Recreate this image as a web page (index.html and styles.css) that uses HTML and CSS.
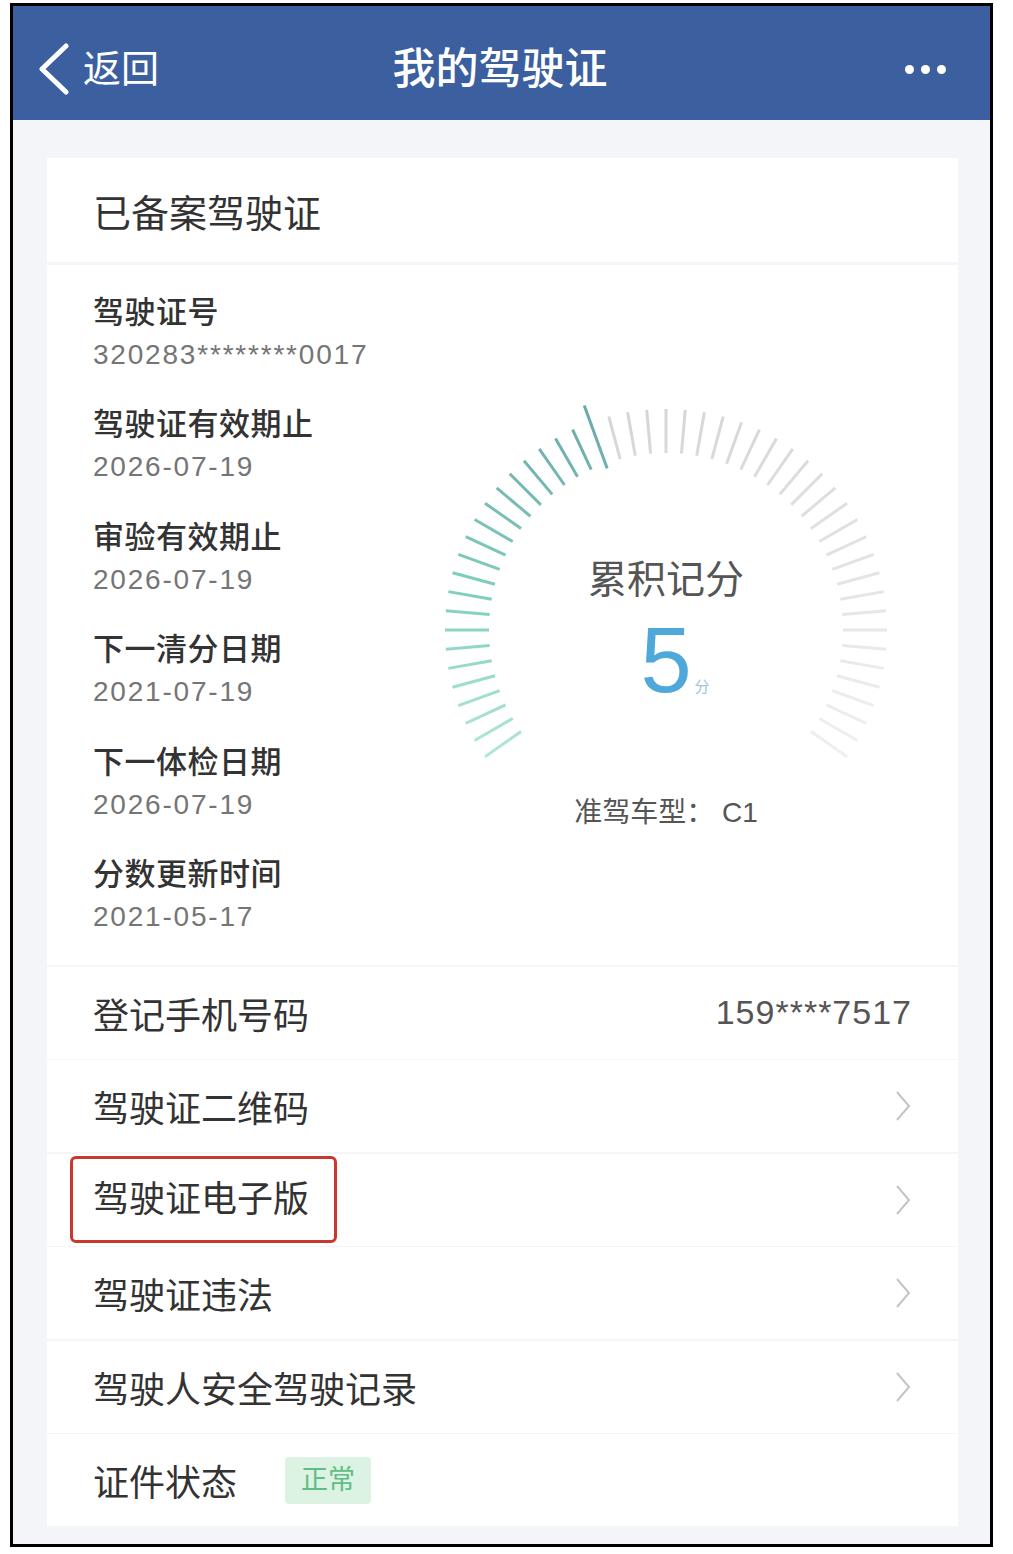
FILE: index.html
```html
<!DOCTYPE html>
<html lang="zh-CN">
<head>
  <meta charset="UTF-8">
  <title>我的驾驶证</title>
  <link rel="stylesheet" href="styles.css">
</head>
<body>
  <div class="phone">
    <!-- 顶部导航 -->
    <header class="navbar">
      <a class="nav-back">
        <svg width="32" height="52" viewBox="0 0 32 52"><polyline points="28,3 4,26 28,49" fill="none" stroke="#fff" stroke-width="5" stroke-linecap="round" stroke-linejoin="round"/></svg>
        <span>返回</span>
      </a>
      <h1 class="nav-title">我的驾驶证</h1>
      <span class="nav-more"><i></i><i></i><i></i></span>
    </header>

    <main class="page">
      <section class="card card-title">已备案驾驶证</section>

      <section class="card license">
        <dl class="license-info">
          <div class="info-item"><dt>驾驶证号</dt><dd>320283********0017</dd></div>
          <div class="info-item"><dt>驾驶证有效期止</dt><dd>2026-07-19</dd></div>
          <div class="info-item"><dt>审验有效期止</dt><dd>2026-07-19</dd></div>
          <div class="info-item"><dt>下一清分日期</dt><dd>2021-07-19</dd></div>
          <div class="info-item"><dt>下一体检日期</dt><dd>2026-07-19</dd></div>
          <div class="info-item"><dt>分数更新时间</dt><dd>2021-05-17</dd></div>
        </dl>

        <!-- 记分表盘 -->
        <div class="score">
          <div class="dial">
            <svg class="dial-ticks" width="500" height="410" viewBox="0 0 500 410">
              <defs>
                <linearGradient id="tealFade" x1="0" y1="1" x2="0.35" y2="0">
                  <stop offset="0" stop-color="#c4efe2"/>
                  <stop offset="0.45" stop-color="#80d0bd"/>
                  <stop offset="1" stop-color="#6aa3a6"/>
                </linearGradient>
                <linearGradient id="greyFade" x1="0.3" y1="0" x2="0.6" y2="1">
                  <stop offset="0" stop-color="#d2d2d2"/>
                  <stop offset="1" stop-color="#f0f0f0"/>
                </linearGradient>
                <mask id="tealMask">
                  <g stroke="#fff" stroke-width="3">
                    <line x1="250" y1="29" x2="250" y2="73" transform="rotate(-125 250 250)"/>
                    <line x1="250" y1="29" x2="250" y2="73" transform="rotate(-120 250 250)"/>
                    <line x1="250" y1="29" x2="250" y2="73" transform="rotate(-115 250 250)"/>
                    <line x1="250" y1="29" x2="250" y2="73" transform="rotate(-110 250 250)"/>
                    <line x1="250" y1="29" x2="250" y2="73" transform="rotate(-105 250 250)"/>
                    <line x1="250" y1="29" x2="250" y2="73" transform="rotate(-100 250 250)"/>
                    <line x1="250" y1="29" x2="250" y2="73" transform="rotate(-95 250 250)"/>
                    <line x1="250" y1="29" x2="250" y2="73" transform="rotate(-90 250 250)"/>
                    <line x1="250" y1="29" x2="250" y2="73" transform="rotate(-85 250 250)"/>
                    <line x1="250" y1="29" x2="250" y2="73" transform="rotate(-80 250 250)"/>
                    <line x1="250" y1="29" x2="250" y2="73" transform="rotate(-75 250 250)"/>
                    <line x1="250" y1="29" x2="250" y2="73" transform="rotate(-70 250 250)"/>
                    <line x1="250" y1="29" x2="250" y2="73" transform="rotate(-65 250 250)"/>
                    <line x1="250" y1="29" x2="250" y2="73" transform="rotate(-60 250 250)"/>
                    <line x1="250" y1="29" x2="250" y2="73" transform="rotate(-55 250 250)"/>
                    <line x1="250" y1="29" x2="250" y2="73" transform="rotate(-50 250 250)"/>
                    <line x1="250" y1="29" x2="250" y2="73" transform="rotate(-45 250 250)"/>
                    <line x1="250" y1="29" x2="250" y2="73" transform="rotate(-40 250 250)"/>
                    <line x1="250" y1="29" x2="250" y2="73" transform="rotate(-35 250 250)"/>
                    <line x1="250" y1="29" x2="250" y2="73" transform="rotate(-30 250 250)"/>
                    <line x1="250" y1="29" x2="250" y2="73" transform="rotate(-25 250 250)"/>
                    <line x1="250" y1="11" x2="250" y2="78" transform="rotate(-20 250 250)"/>
                  </g>
                </mask>
                <mask id="greyMask">
                  <g stroke="#fff" stroke-width="3">
                    <line x1="250" y1="29" x2="250" y2="73" transform="rotate(-15 250 250)"/>
                    <line x1="250" y1="29" x2="250" y2="73" transform="rotate(-10 250 250)"/>
                    <line x1="250" y1="29" x2="250" y2="73" transform="rotate(-5 250 250)"/>
                    <line x1="250" y1="29" x2="250" y2="73" transform="rotate(0 250 250)"/>
                    <line x1="250" y1="29" x2="250" y2="73" transform="rotate(5 250 250)"/>
                    <line x1="250" y1="29" x2="250" y2="73" transform="rotate(10 250 250)"/>
                    <line x1="250" y1="29" x2="250" y2="73" transform="rotate(15 250 250)"/>
                    <line x1="250" y1="29" x2="250" y2="73" transform="rotate(20 250 250)"/>
                    <line x1="250" y1="29" x2="250" y2="73" transform="rotate(25 250 250)"/>
                    <line x1="250" y1="29" x2="250" y2="73" transform="rotate(30 250 250)"/>
                    <line x1="250" y1="29" x2="250" y2="73" transform="rotate(35 250 250)"/>
                    <line x1="250" y1="29" x2="250" y2="73" transform="rotate(40 250 250)"/>
                    <line x1="250" y1="29" x2="250" y2="73" transform="rotate(45 250 250)"/>
                    <line x1="250" y1="29" x2="250" y2="73" transform="rotate(50 250 250)"/>
                    <line x1="250" y1="29" x2="250" y2="73" transform="rotate(55 250 250)"/>
                    <line x1="250" y1="29" x2="250" y2="73" transform="rotate(60 250 250)"/>
                    <line x1="250" y1="29" x2="250" y2="73" transform="rotate(65 250 250)"/>
                    <line x1="250" y1="29" x2="250" y2="73" transform="rotate(70 250 250)"/>
                    <line x1="250" y1="29" x2="250" y2="73" transform="rotate(75 250 250)"/>
                    <line x1="250" y1="29" x2="250" y2="73" transform="rotate(80 250 250)"/>
                    <line x1="250" y1="29" x2="250" y2="73" transform="rotate(85 250 250)"/>
                    <line x1="250" y1="29" x2="250" y2="73" transform="rotate(90 250 250)"/>
                    <line x1="250" y1="29" x2="250" y2="73" transform="rotate(95 250 250)"/>
                    <line x1="250" y1="29" x2="250" y2="73" transform="rotate(100 250 250)"/>
                    <line x1="250" y1="29" x2="250" y2="73" transform="rotate(105 250 250)"/>
                    <line x1="250" y1="29" x2="250" y2="73" transform="rotate(110 250 250)"/>
                    <line x1="250" y1="29" x2="250" y2="73" transform="rotate(115 250 250)"/>
                    <line x1="250" y1="29" x2="250" y2="73" transform="rotate(120 250 250)"/>
                    <line x1="250" y1="29" x2="250" y2="73" transform="rotate(125 250 250)"/>
                  </g>
                </mask>
              </defs>
              <rect width="500" height="410" fill="url(#tealFade)" mask="url(#tealMask)"/>
              <rect width="500" height="410" fill="url(#greyFade)" mask="url(#greyMask)"/>
            </svg>
            <div class="dial-text">
              <p class="dial-label">累积记分</p>
              <p class="dial-value">5<small>分</small></p>
            </div>
          </div>
          <p class="score-type">准驾车型： C1</p>
        </div>
      </section>

      <ul class="menu">
        <li class="menu-row"><span>登记手机号码</span><span class="menu-value">159****7517</span></li>
        <li class="menu-row"><span>驾驶证二维码</span><svg class="chevron" width="18" height="34" viewBox="0 0 18 34"><polyline points="3,3 15,17 3,31" fill="none" stroke="#c4c4c4" stroke-width="2"/></svg></li>
        <li class="menu-row"><span class="highlight">驾驶证电子版</span><svg class="chevron" width="18" height="34" viewBox="0 0 18 34"><polyline points="3,3 15,17 3,31" fill="none" stroke="#c4c4c4" stroke-width="2"/></svg></li>
        <li class="menu-row"><span>驾驶证违法</span><svg class="chevron" width="18" height="34" viewBox="0 0 18 34"><polyline points="3,3 15,17 3,31" fill="none" stroke="#c4c4c4" stroke-width="2"/></svg></li>
        <li class="menu-row"><span>驾驶人安全驾驶记录</span><svg class="chevron" width="18" height="34" viewBox="0 0 18 34"><polyline points="3,3 15,17 3,31" fill="none" stroke="#c4c4c4" stroke-width="2"/></svg></li>
        <li class="menu-row menu-status"><span>证件状态</span><span class="badge">正常</span></li>
      </ul>
    </main>
  </div>
</body>
</html>
```

FILE: styles.css
```css
body {
  margin: 0;
  background: #fff;
  font-family: "Liberation Sans", "Noto Sans CJK SC", sans-serif;
}

.phone {
  width: 983px;
  margin: 3px 0 0 10px;
  border: 3px solid #000;
  box-sizing: border-box;
  background: #f4f5f8;
}

/* 导航栏 */
.navbar {
  height: 114px;
  box-sizing: border-box;
  background: #3c5f9f;
  color: #fff;
  display: grid;
  grid-template-columns: 1fr auto 1fr;
  align-items: center;
  padding: 12px 44px 0 41px;
}

.nav-back {
  display: flex;
  align-items: center;
  gap: 13px;
  margin-left: -16px;
  font-size: 38px;
  line-height: 1;
}

.nav-title {
  margin: 0;
  font-size: 43px;
  font-weight: 500;
  line-height: 1;
}

.nav-more {
  justify-self: end;
  display: flex;
  gap: 7px;
}

.nav-more i {
  width: 9px;
  height: 9px;
  border-radius: 50%;
  background: #fff;
}

.page {
  padding: 38px 32px 18px 34px;
}

.card {
  background: #fff;
}

.card-title {
  height: 104px;
  display: flex;
  align-items: center;
  padding-left: 46px;
  margin-bottom: 3px;
  font-size: 38px;
  color: #333;
}

/* 驾驶证信息 */
.license {
  display: flex;
  padding: 26px 0 28px;
  margin-bottom: 2px;
}

.license-info {
  margin: 0;
  flex: 0 0 369px;
  box-sizing: border-box;
  padding-left: 46px;
}

.info-item + .info-item {
  margin-top: 28.4px;
}

.info-item dt {
  font-size: 31px;
  line-height: 44px;
  font-weight: 500;
  color: #333;
  letter-spacing: 0.5px;
}

.info-item dd {
  margin: 0;
  font-size: 28px;
  line-height: 40px;
  color: #757575;
  letter-spacing: 1.8px;
}

/* 记分表盘 */
.score {
  flex: 0 0 500px;
  margin-top: 89px;
  display: flex;
  flex-direction: column;
  align-items: center;
}

.dial {
  display: grid;
  width: 500px;
  height: 410px;
}

.dial > * {
  grid-area: 1 / 1;
}

.dial-text {
  padding-top: 177px;
  text-align: center;
}

.dial-label {
  margin: 0;
  font-size: 39px;
  line-height: 46px;
  color: #555;
}

.dial-value {
  margin: 11px 0 0;
  font-size: 92px;
  line-height: 92px;
  color: #4ea8da;
}

.dial-value small {
  font-size: 15px;
  color: #9cc3d6;
  margin-left: 3px;
  margin-right: -18px;
}

.score-type {
  margin: 5px 0 0;
  font-size: 28px;
  line-height: 36px;
  color: #555;
}

/* 菜单列表 */
.menu {
  list-style: none;
  margin: 0;
  padding: 0;
  display: flex;
  flex-direction: column;
  gap: 1.5px;
}

.menu-row {
  height: 92px;
  background: #fff;
  display: flex;
  align-items: center;
  justify-content: space-between;
  padding: 0 46px;
  font-size: 36px;
  color: #333;
}

.menu-value {
  font-size: 34px;
  color: #555;
  letter-spacing: 1px;
}

.highlight {
  margin-left: -23px;
  padding: 0 25px 0 20px;
  line-height: 81px;
  border: 3px solid #c9382e;
  border-radius: 6px;
}

.menu-status {
  justify-content: flex-start;
}

.badge {
  margin-left: 48px;
  padding: 0 16px;
  height: 47px;
  line-height: 47px;
  font-size: 27px;
  color: #62bd84;
  background: #dcf2e3;
  border-radius: 4px;
}
```
